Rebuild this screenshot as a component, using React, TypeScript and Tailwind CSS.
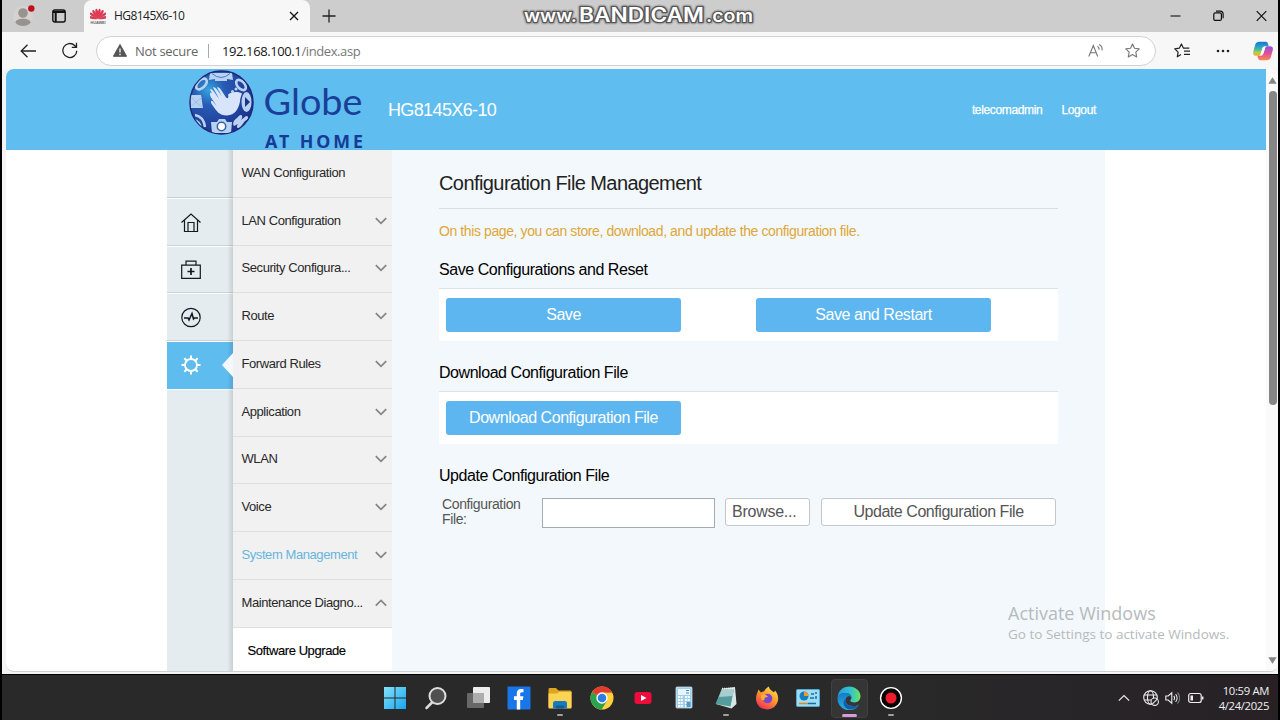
import type { ReactNode } from 'react';

const UI_FONT = "font-['Open_Sans','Noto_Sans',sans-serif]";

const menuItems = [
  { label: 'WAN Configuration', arrow: '' },
  { label: 'LAN Configuration', arrow: 'down' },
  { label: 'Security Configura...', arrow: 'down' },
  { label: 'Route', arrow: 'down' },
  { label: 'Forward Rules', arrow: 'down' },
  { label: 'Application', arrow: 'down' },
  { label: 'WLAN', arrow: 'down' },
  { label: 'Voice', arrow: 'down' },
  { label: 'System Management', arrow: 'down', active: true },
  { label: 'Maintenance Diagno...', arrow: 'up' },
];

function Chevron({ up }: { up: boolean }) {
  return (
    <svg width="12" height="8" viewBox="0 0 12 8" fill="none" stroke="#858585" strokeWidth="1.700">
      <path d={up ? 'M.8 6.600 6 1.400l5.200 5.200' : 'M.8 1.200 6 6.400l5.200-5.200'} />
    </svg>
  );
}

function HuaweiIcon() {
  const petals = [-78, -54, -31, -10, 10, 31, 54, 78];
  return (
    <svg width="16" height="18" viewBox="0 0 16 18">
      {petals.map(a => (
        <path key={a} d="M8 12.500C6.700 9 6.300 4 7.200 2.200 7.600 1.500 8.400 1.500 8.800 2.200 9.700 4 9.300 9 8 12.500z" fill="#dd3c55" transform={`rotate(${a} 8 12) scale(1 .95)`} />
      ))}
      <text x="0.5" y="17" fontSize="3.800" fontWeight="700" fill="#666" textLength="15" fontFamily="Liberation Sans, sans-serif">HUAWEI</text>
    </svg>
  );
}

function BandicamMark() {
  const style = { fontFamily: 'Inter, sans-serif', fontWeight: 600 };
  const layer = (
    <>
      <text x="24" y="21.500" fontSize="18" textLength="53" lengthAdjust="spacingAndGlyphs" style={style}>www.</text>
      <text x="79" y="22" fontSize="19.500" textLength="125" lengthAdjust="spacingAndGlyphs" style={style}>BANDICAM</text>
      <text x="206" y="21.500" fontSize="18" textLength="47" lengthAdjust="spacingAndGlyphs" style={style}>.com</text>
    </>
  );
  return (
    <svg width="280" height="32" viewBox="0 0 280 32">
      <g fill="none" stroke="#999" strokeWidth="5" strokeLinejoin="round" opacity=".5">{layer}</g>
      <g fill="#fff" stroke="#555" strokeWidth="2.600" strokeLinejoin="round" style={{ paintOrder: 'stroke' }}>{layer}</g>
    </svg>
  );
}

function TabStrip() {
  return (
    <div className={`relative flex h-8 shrink-0 bg-[#cdcdcd] ${UI_FONT}`}>
      <div className="flex w-[82px] items-center">
        <svg className="ml-[10px]" width="24" height="24" viewBox="0 0 24 24">
          <circle cx="11" cy="12" r="10" fill="#d5d2d0" />
          <circle cx="11" cy="9" r="4.800" fill="#969390" />
          <path d="M3.500 18.500c0-5 15-5 15 0-2 4.500-13 4.500-15 0z" fill="#969390" />
          <circle cx="19.300" cy="4.500" r="3.200" fill="#c20e1a" />
        </svg>
        <svg className="ml-[16px]" width="14" height="14" viewBox="0 0 14 14" fill="none" stroke="#111" strokeWidth="1.400">
          <rect x=".8" y="1" width="12.400" height="12" rx="2" />
          <path d="M1 3h12M3.700 3v10" strokeWidth="2" />
        </svg>
      </div>
      <div className="flex w-[226px] items-center rounded-t-lg bg-[#f7f7f7]">
        <div className="ml-[6px] flex"><HuaweiIcon /></div>
        <span className="ml-[8px] text-[12px] leading-4 tracking-[-0.55px] text-[#222]">HG8145X6-10</span>
        <svg className="mr-[11px] ml-auto" width="10" height="10" viewBox="0 0 10 10" stroke="#111" strokeWidth="1.300"><path d="m1 1 8 8M9 1 1 9" /></svg>
      </div>
      <svg className="mt-[9px] ml-[12px]" width="14" height="14" viewBox="0 0 14 14" stroke="#222" strokeWidth="1.300"><path d="M7 .5v13M.5 7h13" /></svg>
      <div className="absolute top-0 left-[498px]"><BandicamMark /></div>
      <div className="mr-[11px] ml-auto flex items-center gap-[32px]">
        <svg width="11" height="12" viewBox="0 0 11 12" stroke="#111" strokeWidth="1.100"><path d="M.5 6h10" /></svg>
        <svg width="11" height="12" viewBox="0 0 11 12" fill="none" stroke="#111" strokeWidth="1.200">
          <rect x=".8" y="2.800" width="7.600" height="7.600" rx="1.500" />
          <path d="M3 1.200h4.500a2.600 2.600 0 0 1 2.600 2.600v4.500" />
        </svg>
        <svg width="11" height="12" viewBox="0 0 11 12" stroke="#111" strokeWidth="1.200"><path d="m.7 1.200 9.600 9.600m0-9.600L.7 10.800" /></svg>
      </div>
    </div>
  );
}

const STAR = 'm7.500 1 2 4.300 4.700.6-3.400 3.300.9 4.700-4.200-2.300-4.200 2.300.9-4.700L.8 5.900l4.700-.6z';

function AddressBar() {
  return (
    <div className={`flex h-[37px] shrink-0 items-center bg-[#f7f7f7] ${UI_FONT}`}>
      <svg className="ml-[18px]" width="16" height="14" viewBox="0 0 16 14" fill="none" stroke="#222" strokeWidth="1.300"><path d="M7.500.8 1.200 7l6.300 6.200M1.200 7H16" /></svg>
      <svg className="ml-[25px]" width="18" height="17" viewBox="0 0 18 17" fill="none" stroke="#222" strokeWidth="1.300"><path d="M15.800 8.700a7 7 0 1 1-2.100-5.200l1.600 1.700M15.500.8v4.600h-4.700" /></svg>
      <div className="ml-[17px] flex h-[30px] w-[1060px] items-center rounded-full border border-[#d2d2d2] bg-white">
        <svg className="ml-[16px]" width="14" height="13" viewBox="0 0 14 13">
          <path d="M7 .5 13.600 12.300H.4z" fill="#555" stroke="#555" strokeLinejoin="round" />
          <path d="M7 4.500v4M7 9.800v1.400" stroke="#fff" strokeWidth="1.300" />
        </svg>
        <span className="ml-[8px] w-[63px] text-[13px] leading-4 tracking-[-0.3px] whitespace-nowrap text-[#666]">Not secure</span>
        <div className="ml-[10px] h-[14px] w-px bg-[#aaa]" />
        <span className="ml-[13px] text-[13px] leading-4 tracking-[-0.4px] text-[#777]"><span className="text-[#161616]">192.168.100.1</span>/index.asp</span>
        <svg className="ml-auto" width="16" height="14" viewBox="0 0 16 14" fill="none" stroke="#767676" strokeWidth="1.100"><path d="m.8 12.500 4.500-11 4.400 11M2.400 8.700h5.800M9.500 2.200c1.300.8 1.700 2 1.600 3.600M11.200.5c2.300 1.200 3.200 3.400 2.800 5.800" /></svg>
        <svg className="mr-[15px] ml-[21px]" width="15" height="15" viewBox="0 0 15 15" fill="none" stroke="#777" strokeWidth="1.100" strokeLinejoin="round"><path d={STAR} /></svg>
      </div>
      <svg className="ml-[18px]" width="17" height="16" viewBox="0 0 17 16" fill="none" stroke="#222" strokeWidth="1.200" strokeLinejoin="round"><path d="m7 11.500-3.700 2.300.8-4.600L.8 5.800l4.500-.6L7.400 1l2.100 4.200h5.800M10 8.200h6M10 11.400h6" /></svg>
      <svg className="ml-[25px]" width="14" height="4" viewBox="0 0 14 4" fill="#222"><circle cx="2" cy="2" r="1.300" /><circle cx="7" cy="2" r="1.300" /><circle cx="12" cy="2" r="1.300" /></svg>
      <svg className="mr-[4px] ml-auto" width="22" height="20" viewBox="0 0 22 20">
        <defs>
          <linearGradient id="cpA" x1="0" y1="0" x2="0" y2="1"><stop offset="0" stopColor="#1c72d8" /><stop offset=".5" stopColor="#31b7b4" /><stop offset=".8" stopColor="#c6cf35" /><stop offset="1" stopColor="#f5a623" /></linearGradient>
          <linearGradient id="cpB" x1="0" y1="0" x2="0" y2="1"><stop offset="0" stopColor="#8c52dc" /><stop offset=".5" stopColor="#e04f9c" /><stop offset="1" stopColor="#fb8a4b" /></linearGradient>
        </defs>
        <path d="M7.500.8h6.200c1.500 0 2 1 2.500 2.600l.5 1.800h-3.200c-1.700 0-2.400 1-2.900 2.600L9 12.500c-.5 1.500-1.200 2.200-2.800 2.200H4C1.500 14.700.6 13 1.300 10.500l2-7C3.900 1.600 5.300.8 7.500.8z" fill="url(#cpA)" />
        <path d="M14.500 19.200H8.300c-1.500 0-2-1-2.500-2.600l-.3-1.800h2.700c1.700 0 2.600-1 3.100-2.600L13 7.500c.5-1.500 1.200-2.200 2.800-2.200H18c2.500 0 3.400 1.700 2.700 4.200l-2 7c-.6 1.900-2 2.700-4.200 2.700z" fill="url(#cpB)" />
        <path d="m10.800 5.800-2.400 8h1.300c1 0 1.500-.8 1.800-1.700l1.900-6.300z" fill="#fff" />
      </svg>
    </div>
  );
}

function GlobeLogo() {
  return (
    <svg className="overflow-visible" width="180" height="81" viewBox="0 0 180 81">
      <defs>
        <radialGradient id="orb" cx=".3" cy=".3" r=".8"><stop offset="0" stopColor="#35a5df" /><stop offset=".3" stopColor="#285cb5" /><stop offset="1" stopColor="#1b2e88" /></radialGradient>
        <clipPath id="orbClip"><circle cx="34.500" cy="33.500" r="31" /></clipPath>
      </defs>
      <circle cx="34.500" cy="33.500" r="31.500" fill="url(#orb)" stroke="#1d2a78" strokeWidth="1.500" />
      <g clipPath="url(#orbClip)" fill="#b9d2f2">
        <path d="M23 4h22l1 7-6-1 0 2H28V10l-6 1z" />
        <path d="M25 4.500q9 8 18 0" fill="none" stroke="#4a79c6" />
        <path d="M3 26h11l2 13H4z" />
        <path d="m4 28 5 5 6-5M5 37l4-4 6 5" fill="none" stroke="#9dbce6" />
        <g fill="none" stroke="#b9d2f2" strokeWidth="2.600">
          <ellipse cx="14.500" cy="15" rx="6.500" ry="3.800" transform="rotate(-45 14.500 15)" />
          <ellipse cx="54" cy="16" rx="6" ry="3.600" transform="rotate(48 54 16)" />
          <path d="M8 46c6 1 9 5 10 12M7 51c4 1 6 4 7 8" />
        </g>
        <ellipse cx="59.500" cy="33" rx="5" ry="10" />
        <path d="m58 28 5 5-5 5z" fill="#1b3388" />
        <path d="M50 49c4-6 7-2 4 2l5-4c4 0 2 4-1 5l-3 4c-3 5-7 3-4-1l-4 2c-2-3 0-6 3-8z" />
        <path d="M24 53h6l2-3h6l2 3h5l-1 11H25z" />
        <circle cx="34.500" cy="57.500" r="4.200" fill="#fff" stroke="#3261ad" strokeWidth="1.500" />
        <circle cx="45.500" cy="22.500" r="1.500" /><circle cx="49" cy="20" r="1.500" />
      </g>
      <path d="M23 21.500c2-1 3 1 9 9l-6-11c2-1 4 2 9 9l-5-9c2-1 4 2 9 10 2 2 3 0 2-3 5-3 9-3 14-1-1 3-2 5-2 8-2 9-5 13-13 14-8 0-10-4-15-11-2-3-1-5 1-3l4 5-6-9c-2-4-1-6 1-4z" transform="translate(0 -1)" fill="#d7e4fa" />
      <text x="76.500" y="46" fontSize="36.500" fill="#1b3f98" fontFamily="Lato, sans-serif" textLength="99" lengthAdjust="spacingAndGlyphs">Globe</text>
      <text x="78" y="78.500" fontSize="17.800" fontWeight="700" fill="#173a96" fontFamily="Noto Sans, sans-serif" textLength="98">AT HOME</text>
    </svg>
  );
}

function PageHeader() {
  return (
    <header className="flex h-[81px] shrink-0 items-center bg-[#60bdef] text-white">
      <div className="ml-[181px] flex"><GlobeLogo /></div>
      <span className="ml-[21px] text-[18px] leading-5 tracking-[-0.63px] whitespace-nowrap">HG8145X6-10</span>
      <div className="mr-[170px] ml-auto flex gap-[19px] text-[12px] leading-4 tracking-[-0.35px] [-webkit-text-stroke:0.25px_white]">
        <span>telecomadmin</span>
        <span>Logout</span>
      </div>
    </header>
  );
}

function RailIcon({ children, active = false }: { children?: ReactNode; active?: boolean }) {
  return (
    <div className={`flex h-[47.78px] items-center border-t border-white pl-[13px] ${active ? 'bg-[#5fbcef]' : 'border-b border-b-[#ccd4d8]'}`}>
      <svg width="22" height="22" viewBox="0 0 22 22" fill="none" stroke={active ? '#fff' : '#111a22'} strokeWidth="1.200">{children}</svg>
    </div>
  );
}

function IconRail() {
  return (
    <div className="relative w-[65.500px] shrink-0 bg-[#e5ecef]">
      <div className="h-[47.78px] border-b border-[#c5ced2]" />
      <RailIcon><path d="M1.500 11.500 11 3l9.500 8.500M4.500 9.500v11h13v-11M8 20.500v-9h6v9" /></RailIcon>
      <RailIcon>
        <path d="M1.700 7.200h18.600v13.100H1.700zM6 7V3.200h10V7" />
        <path d="M11 10v7M7.500 13.500h7" strokeWidth="1.700" />
      </RailIcon>
      <RailIcon>
        <circle cx="11" cy="11.500" r="9.200" />
        <path d="M4 12h4l1 2 3-6.500 1.500 5.500 1-1h3.500" strokeWidth="1.500" />
      </RailIcon>
      <RailIcon active>
        <circle cx="11" cy="11" r="6" strokeWidth="1.800" />
        <path d="M11 5V1.500M11 17v3.500M5 11H1.500M17 11h3.500M6.800 6.800 4.300 4.300M15.200 15.200l2.500 2.500M6.800 15.200l-2.500 2.500M15.200 6.800l2.500-2.500" strokeWidth="2" />
      </RailIcon>
      <div className="h-px bg-white" />
      <div className="absolute inset-y-0 right-0 w-[6px] bg-linear-to-r from-transparent to-black/12" />
      <svg className="absolute top-[203px] right-0" width="12" height="24" viewBox="0 0 12 24"><path d="M12 0v24L1 12z" fill="#f3f8fc" /></svg>
    </div>
  );
}

function SideMenu() {
  return (
    <nav className="w-[159.500px] shrink-0 bg-[#f1f1f1] text-[13px] leading-4 tracking-[-0.42px] text-[#282828]">
      {menuItems.map(item => (
        <div key={item.label} className="flex h-[47.78px] items-center justify-between border-b border-[#dfdfdf] pr-[5px] pb-px pl-[9px]">
          <span className={`whitespace-nowrap ${item.active ? 'text-[#68b5dc]' : ''}`}>{item.label}</span>
          {item.arrow && <Chevron up={item.arrow === 'up'} />}
        </div>
      ))}
      <div className="flex h-[47.78px] items-center bg-white pb-px pl-[15px] text-black [-webkit-text-stroke:0.15px_black]">Software Upgrade</div>
    </nav>
  );
}

function PrimaryButton({ children }: { children: ReactNode }) {
  return <button className="h-[34px] w-[235px] rounded-[3px] bg-[#5eb6f0] leading-5 tracking-[-0.45px] text-white">{children}</button>;
}

function ConfigContent() {
  return (
    <main className="w-[713px] shrink-0 bg-[#f3f8fc] pr-[47px] pl-[47px] text-[16px] tracking-[-0.45px] text-black">
      <h1 className="flex h-[59px] items-center border-b border-[#d9dee2] pt-[7px] text-[20px] leading-6 tracking-[-0.58px] text-[#222]">Configuration File Management</h1>
      <p className="mt-[13px] text-[14px] leading-[18px] tracking-[-0.4px] whitespace-nowrap text-[#dfa638]">On this page, you can store, download, and update the configuration file.</p>
      <h2 className="mt-[20px] leading-5">Save Configurations and Reset</h2>
      <div className="mt-[8px] flex h-[53px] gap-[75px] border-t border-[#dde2e6] bg-white px-[7px] pt-[9px]">
        <PrimaryButton>Save</PrimaryButton>
        <PrimaryButton>Save and Restart</PrimaryButton>
      </div>
      <h2 className="mt-[22px] leading-5">Download Configuration File</h2>
      <div className="mt-[8px] flex h-[53px] border-t border-[#dde2e6] bg-white px-[7px] pt-[9px]">
        <PrimaryButton>Download Configuration File</PrimaryButton>
      </div>
      <h2 className="mt-[22px] leading-5">Update Configuration File</h2>
      <div className="mt-[12px] flex text-[#555]">
        <label className="-mt-px w-[103px] pl-[3px] text-[14px] leading-[15px] tracking-[-0.37px]">Configuration<br />File:</label>
        <div className="h-[30px] w-[173px] border border-[#a5acb1] bg-white" />
        <button className="ml-[10px] h-[28px] w-[85px] rounded-[3px] border border-[#c3c7ca] bg-white pl-[6px] text-left leading-5 tracking-[-0.25px]">Browse...</button>
        <button className="ml-[11px] h-[28px] w-[235px] rounded-[3px] border border-[#c3c7ca] bg-white leading-5 tracking-[-0.45px]">Update Configuration File</button>
      </div>
    </main>
  );
}

function ScrollBar() {
  return (
    <div className="flex w-[12px] shrink-0 flex-col items-center bg-[#fafafa]">
      <svg className="mt-[8px] ml-px" width="9" height="7" viewBox="0 0 9 7" fill="#858585"><path d="M4.500.3 8.700 6.700H.3z" /></svg>
      <div className="mt-[7px] ml-px h-[314px] w-[8px] rounded-full bg-[#868686]" />
      <svg className="mt-auto mb-[7px] ml-px" width="9" height="7" viewBox="0 0 9 7" fill="#858585"><path d="M4.500 6.700.3.300h8.400z" /></svg>
    </div>
  );
}

function TaskIcon({ children, open = false, active = false }: { children: ReactNode; open?: boolean; active?: boolean }) {
  return (
    <div className="flex w-[41.3px] justify-center">
      <div className={`flex h-[39px] w-[37px] flex-col items-center rounded ${active ? 'border border-[#414141] bg-[#353535] pt-[6px]' : 'pt-[7px]'}`}>
        <svg className="shrink-0" width="24" height="24" viewBox="0 0 24 24">{children}</svg>
        {active && <div className="mt-[4px] h-[2.500px] w-[15px] shrink-0 rounded-full bg-[#d79bdb]" />}
        {open && <div className="mt-[3.500px] h-[2.500px] w-[6px] rounded-full bg-[#a0a0a0]" />}
      </div>
    </div>
  );
}

function TaskIcons() {
  return (
    <div className="ml-[372.500px] flex pt-[4px]">
      <TaskIcon>
        <defs><linearGradient id="win" x1="0" y1="0" x2="1" y2="1"><stop stopColor="#83e2fb" /><stop offset="1" stopColor="#18a6ed" /></linearGradient></defs>
        <path d="M1 1h10.500v10.500H1zM12.500 1H23v10.500H12.500zM1 12.500h10.500V23H1zM12.500 12.500H23V23H12.500z" fill="url(#win)" />
      </TaskIcon>
      <TaskIcon>
        <path d="m8 16.500-5.500 5.500" stroke="#ddd" strokeWidth="2.500" strokeLinecap="round" />
        <circle cx="13.500" cy="10" r="8" fill="#505050" stroke="#dedede" strokeWidth="2" />
      </TaskIcon>
      <TaskIcon>
        <rect x="7" y="1" width="17" height="16" rx="1" fill="#ececec" />
        <rect x="1" y="7" width="17" height="15" rx="1" fill="#686868" />
        <path d="M7 7h11v10H7z" fill="#adadad" />
      </TaskIcon>
      <TaskIcon>
        <rect x=".5" y=".5" width="23" height="23" rx="1" fill="#1976e8" />
        <path d="M9.800 23.500V14H7v-3.700h2.800V7.800c0-3.500 2-4.800 4.400-4.800 1 0 2 .2 2.300.3v3h-1.700c-1.300 0-1.600.7-1.600 1.800v2.200h3.200l-.6 3.700h-2.600v9.500z" fill="#fff" />
      </TaskIcon>
      <TaskIcon open>
        <path d="M.5 3.500c0-1 .6-1.500 1.500-1.500h6l2.500 2.500H22c1 0 1.500.5 1.500 1.500v15H.5z" fill="#dfa51f" />
        <path d="M.5 7.500H9l2-1.500h12.500v15.500c0 .6-.4 1-1 1h-21c-.6 0-1-.4-1-1z" fill="#fbd455" />
        <path d="M5 17.500c0-1.500.8-2.500 2.300-2.500h9.400c1.500 0 2.300 1 2.300 2.500v5H5z" fill="#167abf" />
        <path d="M8 19.500h8v3H8z" fill="#0f5c99" />
      </TaskIcon>
      <TaskIcon>
        <circle cx="12" cy="12" r="11.500" fill="#ffd03c" />
        <path d="M12 12 2 6.300A11.500 11.500 0 0 1 22 6.300H12z" fill="#e33b2e" />
        <path d="M2 6.300A11.500 11.500 0 0 0 11.500 23.500L17 15z" fill="#2ba24c" />
        <path d="M12 .5A11.500 11.500 0 0 1 22 6.500H12z" fill="#e33b2e" />
        <circle cx="12" cy="12" r="5.700" fill="#fff" /><circle cx="12" cy="12" r="4.300" fill="#2e7ce4" />
      </TaskIcon>
      <TaskIcon>
        <rect x="3.500" y="6" width="17" height="12" rx="3" fill="#f00b3d" />
        <path d="m10 9 5.500 3-5.500 3z" fill="#fff" />
      </TaskIcon>
      <TaskIcon>
        <rect x="4" y="1" width="16" height="21" rx="1" fill="#9ed0ec" stroke="#e1eef6" strokeWidth=".7" />
        <rect x="6" y="3" width="12" height="6" fill="#e9f5fc" />
        <path d="M6 11h5M13 11h5M6 14h5M13 14h5M6 17h5M13 17h5M6 20h5M13 20h5" stroke="#fff" strokeWidth="2" strokeDasharray="2 .7" />
        <path d="M14 4.500h3M14 7h3" stroke="#478fc1" />
        <rect x="14.500" y="16" width="4" height="5" fill="#5599c5" />
      </TaskIcon>
      <TaskIcon open>
        <path d="M8 2.500 21 1l1.500 17-5 4.500L2 18z" fill="#d7e6e5" />
        <path d="M8 3 20 3l-3.500 17.500L1.500 18z" fill="#559c9f" />
        <path d="M8 3h12l-1.500 7L5 11z" fill="#a9cdce" />
        <path d="M8 2.500h12" stroke="#eee" strokeWidth="1.500" strokeDasharray="1 1" />
      </TaskIcon>
      <TaskIcon>
        <defs><linearGradient id="fox" x1=".8" y1="0" x2=".2" y2="1"><stop stopColor="#ffe34a" /><stop offset=".45" stopColor="#ff982c" /><stop offset="1" stopColor="#ee265a" /></linearGradient></defs>
        <path d="M3.500 3.500 6 6.500c1-1 2-1 3-1 1-2 2.500-4 5-5 0 3 3 4 5 6l1-2c3 3.500 3.500 7 3 10-1 5-5.500 9-11 9C6 23.500 1 19 1 12.500c0-3.500 1.500-6 2.500-9z" fill="url(#fox)" />
        <circle cx="12.500" cy="12.500" r="4.800" fill="#7846cf" />
        <path d="M6 9c3-2 6 0 7 2-3 0-4 1-3.500 3-2 1-4-1-3.500-5z" fill="#ffae35" />
      </TaskIcon>
      <TaskIcon>
        <rect x=".5" y="3.500" width="23" height="17" rx="1" fill="#9edcf4" stroke="#50a9d6" />
        <circle cx="8" cy="10" r="4.500" fill="#167ebd" /><path d="M8 10V5.500A4.500 4.500 0 0 1 12.500 10z" fill="#ee9a30" />
        <path d="M14 12h4M15 8h3M20 6v2M20 10v3" stroke="#176ca4" strokeWidth="1.500" />
        <path d="M3 17.500h9" stroke="#e28724" strokeWidth="1.500" /><path d="M12 17.500h8" stroke="#176ca4" strokeWidth="1.500" />
      </TaskIcon>
      <TaskIcon active>
        <defs>
          <linearGradient id="edgeA" x1="0" y1="0" x2="1" y2="0"><stop stopColor="#279be0" /><stop offset=".6" stopColor="#35c4cb" /><stop offset="1" stopColor="#6ce65b" /></linearGradient>
          <linearGradient id="edgeB" x1="0" y1="0" x2="0" y2="1"><stop stopColor="#137bc9" /><stop offset="1" stopColor="#27b1df" /></linearGradient>
        </defs>
        <path d="M.6 11C1.500 4.500 6.200.5 12 .5c6.500 0 11.500 4.500 11.500 9.800 0 3.700-2.700 6.200-6 6.200-2.500 0-4.300-1-4.300-2 0-.7 1.200-1 1.200-3 0-2.500-2.500-4.500-6-4.500-3.600 0-6.400 1.500-7.800 4z" fill="url(#edgeA)" />
        <path d="M.5 12c.5-3 3.300-5 7.900-5 3.500 0 6 2 6 4.500-1-1.500-4-2-5.500 1-2 4 2.100 8 8.100 7.500 2-.2 3.700-.8 5-1.600A11.500 11.500 0 0 1 .5 12z" fill="url(#edgeB)" />
        <path d="M9 12.500c-2 4 2.100 8 8.100 7.500 2-.2 3.700-.8 5-1.600-1.900 3.100-5.600 5.100-9.800 5.100C7.500 22.500 4 16.500 9 12.500z" fill="#155ba8" />
      </TaskIcon>
      <TaskIcon open>
        <circle cx="12" cy="12" r="10.400" fill="#050505" stroke="#fff" strokeWidth="1.400" />
        <circle cx="12" cy="12" r="5.500" fill="#f01c2d" />
      </TaskIcon>
    </div>
  );
}

function Taskbar() {
  return (
    <div className={`flex h-[45px] shrink-0 bg-linear-to-r from-[#292929] from-70% to-[#272126] text-[#f1f1f1] ${UI_FONT}`}>
      <TaskIcons />
      <div className="mr-[9px] ml-auto flex items-center">
        <svg width="12" height="8" viewBox="0 0 12 8" fill="none" stroke="#eee" strokeWidth="1.200"><path d="M.8 6.700 6 1.500l5.200 5.200" /></svg>
        <svg className="ml-[13px]" width="16" height="16" viewBox="0 0 16 16" fill="none" stroke="#eee" strokeWidth="1.100">
          <circle cx="7.500" cy="7.500" r="6.800" /><ellipse cx="7.500" cy="7.500" rx="3" ry="6.800" /><path d="M1.200 5h12.600M1.200 10h7" />
          <circle cx="11.700" cy="11.700" r="3.700" fill="#272426" /><path d="m9.200 14.200 5-5" />
        </svg>
        <svg className="ml-[6px]" width="15" height="14" viewBox="0 0 15 14" fill="none" stroke="#eee" strokeWidth="1.100"><path d="M.8 5h2.400L6.800 1.800v10.400L3.200 9H.8zM8.800 5c1 1 1 3 0 4M10.600 3.200c2 2 2 5.600 0 7.600" /><path d="M12.400 1.500c3 3 3 8 0 11" stroke="#777" /></svg>
        <svg className="ml-[8px]" width="16" height="12" viewBox="0 0 16 12" fill="none" stroke="#eee" strokeWidth="1.200"><rect x=".7" y="1.500" width="12.500" height="9" rx="2" /><path d="M14.700 4.500v3" strokeWidth="1.500" /><rect x="2.500" y="3.500" width="2.500" height="5" fill="#eee" stroke="none" /></svg>
        <div className="ml-[13px] w-[52px] text-right text-[11.3px] leading-[15px] tracking-[-0.35px] whitespace-nowrap">
          <div>10:59 AM</div>
          <div className="-ml-1">4/24/2025</div>
        </div>
      </div>
    </div>
  );
}

export default function App() {
  return (
    <div className="relative flex h-[720px] w-[1280px] flex-col overflow-hidden bg-black px-[2px] font-['Liberation_Sans',Arial,sans-serif]">
      <TabStrip />
      <AddressBar />
      <div className="h-[605px] shrink-0 bg-[#f4f4f5] pl-[4px]">
        <div className="flex h-[603px] overflow-hidden rounded-lg border-b border-[#cfd0d4] bg-white">
          <div className="flex min-w-0 flex-1 flex-col overflow-hidden">
            <PageHeader />
            <div className="flex min-h-0 flex-1 overflow-hidden pl-[161px]">
              <IconRail />
              <SideMenu />
              <ConfigContent />
            </div>
          </div>
          <ScrollBar />
        </div>
      </div>
      <div className="h-px shrink-0 bg-black" />
      <Taskbar />
      <div className={`absolute top-[603px] left-[1008px] whitespace-nowrap text-[#b6babd] ${UI_FONT}`}>
        <div className="text-[18px] leading-[21px]">Activate Windows</div>
        <div className="text-[13.5px] leading-[21px]">Go to Settings to activate Windows.</div>
      </div>
    </div>
  );
}
